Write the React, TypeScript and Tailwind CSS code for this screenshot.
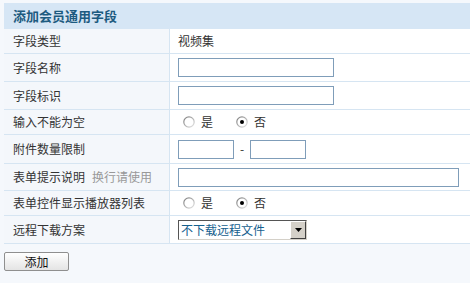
import React from "react";

const font = { fontFamily: '"Noto Sans CJK SC", "Liberation Sans", sans-serif' };

function Radio({ checked }: { checked?: boolean }) {
  return (
    <svg width="12" height="12" viewBox="0 0 12 12" className="shrink-0">
      <defs>
        <linearGradient id={checked ? "rg1" : "rg0"} x1="0" y1="0" x2="1" y2="1">
          <stop offset="0" stopColor="#7a7a7a" />
          <stop offset="1" stopColor="#e6e6e6" />
        </linearGradient>
      </defs>
      <circle cx="6" cy="6" r="5.2" fill="#fff" stroke={`url(#${checked ? "rg1" : "rg0"})`} strokeWidth="1.2" />
      {checked && <circle cx="6" cy="6" r="2" fill="#000" />}
    </svg>
  );
}

function Row({ label, hint, h, children }: { label: string; hint?: string; h: string; children: React.ReactNode }) {
  return (
    <div className={`flex ${h} border-b border-[#d6e5f2]`}>
      <div className="w-[166px] shrink-0 flex items-center pl-[9px] border-r border-[#d6e5f2] bg-[#f4f7fb] text-[12px] text-[#333]">
        {label}
        {hint && <span className="ml-[7px] text-[#999]">{hint}</span>}
      </div>
      <div className="flex-1 flex items-center pl-[8px] bg-white text-[12px] text-[#333]">{children}</div>
    </div>
  );
}

function TextBox({ w }: { w: string }) {
  return <input className={`${w} h-[19px] border border-[#7f9db9] bg-white outline-none`} />;
}

function YesNo() {
  return (
    <div className="flex items-center">
      <div className="ml-[5px] flex items-center gap-[6px]">
        <Radio />
        <span>是</span>
      </div>
      <div className="ml-[23px] flex items-center gap-[6px]">
        <Radio checked />
        <span>否</span>
      </div>
    </div>
  );
}

export default function App() {
  return (
    <div className="w-[470px] h-[283px] bg-[#f5f8fc] pt-[3px] pl-[4px]" style={font}>
      <div className="w-[466px]">
        <div className="h-[26px] bg-[#d6e6f5] flex items-center pl-[9px] text-[13px] font-bold text-[#1d5b80]">
          添加会员通用字段
        </div>
        <Row label="字段类型" h="h-[25px]">
          <span>视频集</span>
        </Row>
        <Row label="字段名称" h="h-[28px]">
          <TextBox w="w-[156px]" />
        </Row>
        <Row label="字段标识" h="h-[28px]">
          <TextBox w="w-[156px]" />
        </Row>
        <Row label="输入不能为空" h="h-[25px]">
          <YesNo />
        </Row>
        <Row label="附件数量限制" h="h-[29px]">
          <TextBox w="w-[56px]" />
          <span className="mx-[6px]">-</span>
          <TextBox w="w-[56px]" />
        </Row>
        <Row label="表单提示说明" hint="换行请使用" h="h-[27px]">
          <TextBox w="w-[281px]" />
        </Row>
        <Row label="表单控件显示播放器列表" h="h-[25px]">
          <YesNo />
        </Row>
        <Row label="远程下载方案" h="h-[28px]">
          <div className="w-[129px] h-[20px] flex border-t border-l border-t-[#555] border-l-[#555] border-b border-r border-b-[#d4d0c8] border-r-[#d4d0c8] bg-white">
            <span className="flex-1 pl-[2px] text-[12px] leading-[18px] text-[#15608e]">不下载远程文件</span>
            <div className="w-[16px] h-[18px] bg-[#d4d0c8] border border-t-white border-l-white border-b-[#404040] border-r-[#404040] flex items-center justify-center">
              <svg width="7" height="4" viewBox="0 0 7 4">
                <polygon points="0,0 7,0 3.5,4" fill="#000" />
              </svg>
            </div>
          </div>
        </Row>
        <button className="mt-[8px] w-[65px] h-[19px] rounded-[2px] border border-[#8f8f8f] bg-gradient-to-b from-white to-[#e4e4e4] text-[12px] text-[#111] leading-[17px]">
          添加
        </button>
      </div>
    </div>
  );
}
